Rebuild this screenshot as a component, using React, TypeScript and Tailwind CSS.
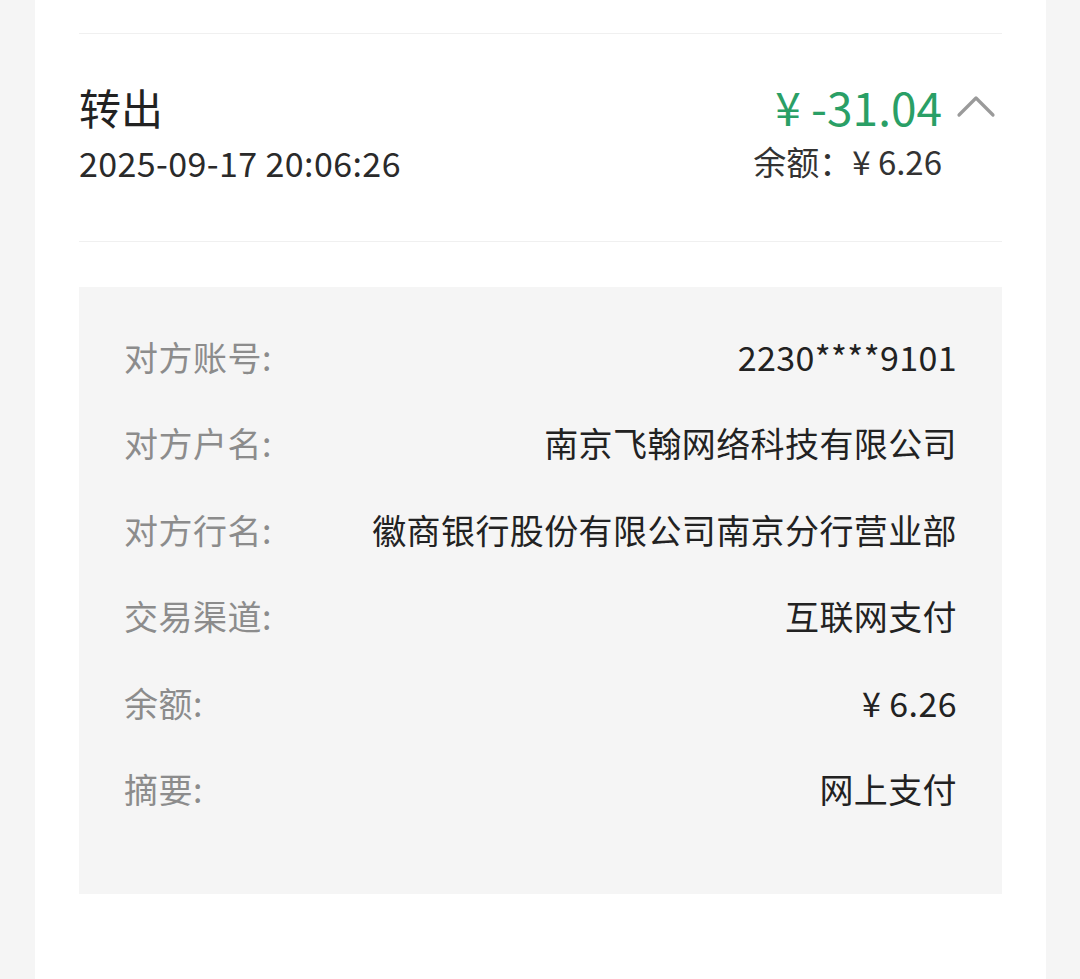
const rows = [
  { label: '对方账号:', value: '2230****9101' },
  { label: '对方户名:', value: '南京飞翰网络科技有限公司' },
  { label: '对方行名:', value: '徽商银行股份有限公司南京分行营业部' },
  { label: '交易渠道:', value: '互联网支付' },
  { label: '余额:', value: '¥ 6.26' },
  { label: '摘要:', value: '网上支付' },
]

function ChevronUp() {
  return (
    <svg width="40" height="24" viewBox="0 0 40 24" fill="none">
      <path d="M3 21 L20 4 L37 21" stroke="#9a9a9a" strokeWidth="3.2" strokeLinecap="round" strokeLinejoin="round" />
    </svg>
  )
}

export default function App() {
  return (
    <div
      className="min-h-[979px] bg-[#f5f5f5] pl-[35px] pr-[34px]"
      style={{ fontFamily: '"Noto Sans CJK SC", "Noto Sans", sans-serif' }}
    >
      <div className="h-[979px] bg-white px-[44px] pt-[33px]">
        {/* Summary */}
        <div className="flex justify-between h-[209px] border-t border-b border-[#f0f0f0]">
          <div className="flex flex-col pt-[49px]">
            <span className="text-[42px] leading-[48px] text-[#222]">转出</span>
            <span className="mt-[12px] text-[34px] leading-[40px] tracking-[0.4px] text-[#2a2a2a]">
              2025-09-17 20:06:26
            </span>
          </div>
          <div className="flex flex-col items-end pt-[44px]">
            <div className="flex items-center">
              <span className="text-[46px] leading-[56px] text-[#2a9f66]">¥ -31.04</span>
              <span className="w-[60px] flex justify-end pr-[6px]">
                <ChevronUp />
              </span>
            </div>
            <span className="mt-[7px] mr-[60px] text-[33px] leading-[40px] text-[#333]">余额：¥ 6.26</span>
          </div>
        </div>

        {/* Detail */}
        <div className="mt-[45px] h-[607px] bg-[#f5f5f5] px-[45px] pt-[26px]">
          {rows.map((r) => (
            <div key={r.label} className="flex items-center justify-between h-[86.5px]">
              <span className="text-[34px] tracking-[0.5px] text-[#8c8c8c]">{r.label}</span>
              <span className="text-[34px] tracking-[0.4px] text-[#222]">{r.value}</span>
            </div>
          ))}
        </div>
      </div>
    </div>
  )
}
